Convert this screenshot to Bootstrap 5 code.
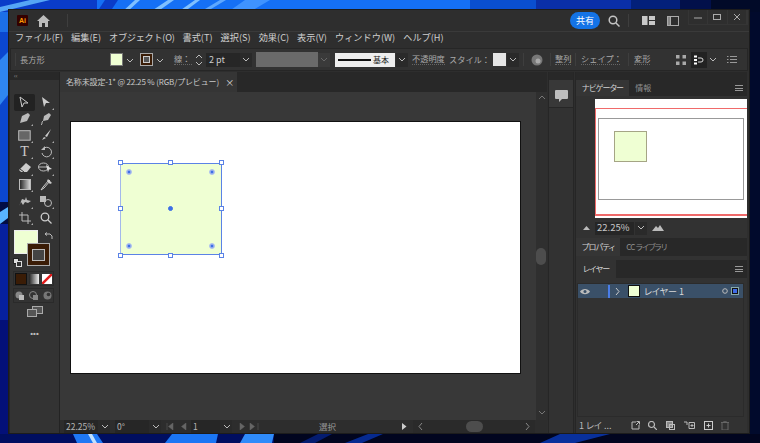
<!DOCTYPE html>
<html lang="ja"><head><meta charset="utf-8">
<link href="https://cdn.jsdelivr.net/npm/bootstrap@5.3.0/dist/css/bootstrap.min.css" rel="stylesheet">
<style>
html,body{height:443px;overflow:hidden}
body{position:relative;background:#02104a;font-family:"Noto Sans CJK JP","Liberation Sans",sans-serif;font-size:9.5px;color:#c4c4c4;line-height:1;white-space:nowrap}
.wall{position:absolute;inset:0;width:760px;height:443px}
.aiwin{position:absolute;left:8px;top:9px;width:742px;height:425px;background:#2e2e2e;border:1px solid #1c1c1c;display:flex;flex-direction:column}
.tbar{height:21px;flex:none}
.logo{width:11px;height:11px;margin-left:8px;background:#330000;color:#ff9a00;font:bold 7px "Liberation Sans",sans-serif;border-radius:1px}
.sharebtn{width:30px;height:17px;background:#1473e6;color:#fff;border-radius:9px;font-size:9px}
.sep{width:1px;height:13px;background:#3e3e3e;flex:none}
.winbtns{width:60px;height:15px;margin:-6px 1px 0 9px;border:1px solid #353535;border-top:0}
.winbtns>div{flex:1;height:100%;border-right:1px solid #353535}
.mbar{height:16px;flex:none;border-top:1px solid #3a3a3a;padding:0 0 3px 6px;gap:8px;color:#cfcfcf;font-size:9.2px}
.ctl{height:23px;flex:none;background:#323232;border:1px solid #262626;margin:1px 1px 1px 1px;padding-left:2px;color:#aaa;font-size:8.2px}
.swatch{background:#efffd3;border:1px solid #777}
.ddn{width:12px;height:14px;background:#2a2a2a;flex:none}
.under{border-bottom:1px dotted #666;padding-bottom:1px}
.wk{flex:1;min-height:0}
.tools{width:51px;flex:none;background:#333;border-right:1px solid #232323;border-left:1px solid #262626;position:relative}
.collapse-strip{height:8px;background:#282828;color:#999;font-size:6px;padding:0 4px}
.toolgrid{display:grid;grid-template-columns:21px 21px;grid-auto-rows:16.5px;margin:14px 0 0 4px}
.toolgrid>div{display:flex;align-items:center;justify-content:center;position:relative}
.toolgrid>.act{background:#222;border-radius:2px}
.toolgrid>.more::after{content:"";position:absolute;right:2px;bottom:1px;border:1px solid transparent;border-right-color:#aaa;border-bottom-color:#aaa}
.centerc{flex:1;min-width:0;display:flex;flex-direction:column;background:#383838}
.tabrow{height:20px;background:#282828;flex:none}
.doc{width:177px;height:20px;background:#353535;padding-left:6px;font-size:8px;letter-spacing:-.15px;color:#c8c8c8}
.canvasrow{flex:1;min-height:0}
.canvasarea{flex:1;min-width:0;position:relative;padding:30px 0 0 11px}
.board{width:449px;height:251px;background:#fff;outline:1px solid #111;position:relative}
.shape{position:absolute;left:49px;top:41px;width:102px;height:92px;background:#efffd3;border:1px solid #5b83e6;border-left-color:#a3b8ec}
.hd{position:absolute;width:5px;height:5px;background:#fff;border:1px solid #5b83e6}
.dot{position:absolute;width:6px;height:6px;border-radius:50%;background:radial-gradient(circle,#3d6fe6 25%,#8aa5ec 45%);border:1px solid #a9bdf0}
.vscr{width:11px;flex:none;background:#2f2f2f;position:relative}
.vpill{position:absolute;left:0;top:156px;width:10px;height:17px;border-radius:5px;background:#4d4d4d}
.stat{height:13px;flex:none;background:#2d2d2d;color:#b5b5b5;font-size:8.5px}
.statbox{background:#262626;height:13px;padding-left:2px}
.dock{width:26px;flex:none;margin-left:1px;background:#323232;border-left:1px solid #262626;border-right:1px solid #262626}
.dockcell{height:28px;padding-top:4px;background:#383838;border-bottom:1px solid #262626}
.rpanel{width:172px;flex:none;margin:0 2px 0 1px;display:flex;flex-direction:column;background:#323232;border-left:1px solid #262626}
.tabline{height:16px;background:#282828;flex:none;font-size:8px;letter-spacing:-.7px;color:#8f8f8f;font-feature-settings:"palt"}
.tabline>.tcell{height:100%;padding:0 6px}
.tabon{background:#353535;color:#d2d2d2}
.burger{width:8px;height:6px;border-top:1px solid #999;border-bottom:1px solid #999;position:relative;margin:0 4px 0 auto}
.burger::after{content:"";position:absolute;left:0;right:0;top:1.5px;border-top:1px solid #999}
.navprev{height:119px;flex:none;margin-top:3px;padding-left:19px}
.navwhite{background:#fff;width:152px;height:119px;position:relative;overflow:hidden}
.laylist{flex:1;min-height:0;margin:5px 3px 0 1px;border:1px solid #2b2b2b}
.lay{height:14px;background:#3a5068;font-size:9px;color:#d8d8d8;position:relative;font-feature-settings:"palt"}
</style></head><body>
<svg class="wall" viewBox="0 0 760 443" aria-hidden="true">
<rect width="760" height="443" fill="#020d44"/>
<rect x="0" y="0" width="97" height="12" fill="#0a3cc8"/>
<rect x="97" y="0" width="373" height="12" fill="#1570f5"/>
<rect x="470" y="0" width="66" height="12" fill="#0a4fd0"/>
<rect x="536" y="0" width="95" height="12" fill="#0a2fa8"/>
<rect x="631" y="0" width="49" height="12" fill="#03207a"/>
<rect x="680" y="0" width="31" height="12" fill="#02104a"/>
<rect x="711" y="0" width="49" height="12" fill="#010a28"/>
<polygon points="0,7 30,0 50,0 0,12" fill="#55a5f5"/>
<polygon points="97,12 105,0 118,0 110,12" fill="#0a3cc8"/>
<polygon points="122,12 135,0 140,0 127,12" fill="#7fc0ff"/>
<polygon points="150,12 168,0 174,0 157,12" fill="#7fc0ff"/>
<polygon points="178,12 195,0 200,0 184,12" fill="#7fc0ff"/>
<polygon points="200,12 220,0 226,0 206,12" fill="#5ea8ff"/>
<polygon points="228,12 245,0 270,0 250,12" fill="#3f93ff"/>
<rect x="0" y="12" width="8" height="20" fill="#1c6fe8"/>
<rect x="0" y="32" width="8" height="170" fill="#0b47cf"/>
<polygon points="0,60 8,52 8,95 0,105" fill="#2f86f0"/>
<polygon points="0,212 8,207 8,218 0,224" fill="#58b4ff"/>
<rect x="0" y="224" width="8" height="219" fill="#06209e"/>
<rect x="0" y="320" width="8" height="123" fill="#031078"/>
<rect x="750" y="12" width="10" height="431" fill="#010a2c"/>
<rect x="0" y="434" width="760" height="9" fill="#000e60"/>
<polygon points="73,434 97,434 103,443 77,443" fill="#1f78f5"/>
<polygon points="88,434 92,434 97,443 93,443" fill="#bfe0ff"/>
<polygon points="172,434 218,434 216,443 165,443" fill="#1b76f5"/>
<polygon points="245,434 274,434 272,443 240,443" fill="#2f8bfa"/>
<rect x="274" y="434" width="486" height="9" fill="#01051f"/>
<polygon points="318,434 332,434 315,443 300,443" fill="#041c70"/>
<polygon points="368,434 383,434 362,443 345,443" fill="#062a90"/>
<polygon points="560,434 610,434 575,443 540,443" fill="#08309c"/>
</svg>
<div class="aiwin">
  <div class="tbar d-flex align-items-center">
    <div class="logo d-flex align-items-center justify-content-center">Ai</div>
    <svg style="margin-left:9px" width="13" height="12" viewBox="0 0 13 12"><path d="M6.500 0 13 6h-2v6H8V8H5v4H2V6H0z" fill="#bdbdbd"/></svg>
    <div class="sep" style="margin-left:17px"></div>
    <div class="ms-auto sharebtn d-flex align-items-center justify-content-center">共有</div>
    <svg style="margin-left:8px" width="12" height="12" viewBox="0 0 12 12" fill="none" stroke="#c4c4c4" stroke-width="1.500"><circle cx="5" cy="5" r="3.800"/><path d="M8 8l3.500 3.500"/></svg>
    <div class="sep" style="margin-left:8px"></div>
    <svg style="margin-left:13px" width="13" height="9" viewBox="0 0 13 9" fill="#c8c8c8"><rect width="5.500" height="9"/><rect x="7" width="6" height="4"/><rect x="7" y="5" width="6" height="4"/></svg>
    <svg style="margin-left:12px" width="12" height="10" viewBox="0 0 12 10" fill="none" stroke="#aaa"><rect x=".5" y=".5" width="11" height="9"/><rect x=".5" y=".5" width="3" height="9" fill="#888"/></svg>
    <div class="winbtns d-flex align-items-center">
      <div class="d-flex align-items-center justify-content-center"><svg width="8" height="8"><path d="M0 5h8" stroke="#aaa"/></svg></div>
      <div class="d-flex align-items-center justify-content-center"><svg width="8" height="8"><rect x=".5" y="1.500" width="7" height="5" fill="none" stroke="#aaa"/></svg></div>
      <div class="d-flex align-items-center justify-content-center"><svg width="8" height="8"><path d="M1 1l6 6M7 1L1 7" stroke="#aaa"/></svg></div>
    </div>
  </div>
  <div class="mbar d-flex align-items-center">
    <span>ファイル(F)</span><span>編集(E)</span><span style="letter-spacing:-.3px">オブジェクト(O)</span><span>書式(T)</span><span>選択(S)</span><span>効果(C)</span><span>表示(V)</span><span>ウィンドウ(W)</span><span>ヘルプ(H)</span>
  </div>
  <div class="ctl d-flex align-items-center">
    <div class="sep" style="margin-left:2px"></div>
    <span style="margin-left:4px;width:90px">長方形</span>
    <div class="swatch" style="width:13px;height:13px;flex:none"></div>
    <svg style="margin-left:1px;flex:none" width="12" height="14" viewBox="0 0 12 14"><path d="M3 6l3 3 3-3" fill="none" stroke="#bbb"/></svg>
    <div style="margin-left:4px;width:13px;height:13px;background:#3a1c06;border:1px solid #aaa;flex:none" class="d-flex align-items-center justify-content-center"><div style="width:7px;height:7px;border:1px solid #ccc;background:#555"></div></div>
    <svg style="margin-left:1px;flex:none" width="12" height="14" viewBox="0 0 12 14"><path d="M3 6l3 3 3-3" fill="none" stroke="#bbb"/></svg>
    <span class="under" style="margin-left:8px;width:18px">線：</span>
    <svg style="margin-left:1px;flex:none" width="12" height="14" viewBox="0 0 12 14"><path d="M3 5l3-3 3 3M3 9l3 3 3-3" fill="none" stroke="#bbb"/></svg>
    <div class="d-flex align-items-center" style="background:#262626;width:34px;height:14px;padding-left:3px;margin-left:1px;font-size:9px;color:#ccc;flex:none">2 pt</div>
    <div class="ddn d-flex align-items-center justify-content-center"><svg width="8" height="6"><path d="M1 1l3 3 3-3" fill="none" stroke="#bbb"/></svg></div>
    <div style="width:62px;height:15px;background:#6a6a6a;margin-left:4px;flex:none"></div>
    <div class="ddn d-flex align-items-center justify-content-center" style="background:#3a3a3a"><svg width="8" height="6"><path d="M1 1l3 3 3-3" fill="none" stroke="#666"/></svg></div>
    <div class="d-flex align-items-center" style="margin-left:5px;width:60px;height:14px;background:#eee;color:#222;padding-left:3px;font-size:8px;flex:none"><span style="display:block;width:33px;height:2px;background:#111;margin-right:2px;flex:none"></span>基本</div>
    <div class="ddn d-flex align-items-center justify-content-center" style="margin-left:1px"><svg width="8" height="6"><path d="M1 1l3 3 3-3" fill="none" stroke="#bbb"/></svg></div>
    <span class="under" style="margin-left:4px;width:33px">不透明度</span>
    <span style="margin-left:4px;width:40px">スタイル：</span>
    <div style="width:13px;height:13px;background:#e6e6e6;margin-left:4px;flex:none"></div>
    <div class="ddn d-flex align-items-center justify-content-center" style="margin-left:1px"><svg width="8" height="6"><path d="M1 1l3 3 3-3" fill="none" stroke="#bbb"/></svg></div>
    <div class="sep" style="margin-left:4px"></div>
    <svg style="margin-left:7px;flex:none" width="12" height="12"><circle cx="6" cy="6" r="5.500" fill="#777"/><circle cx="7" cy="7" r="2.500" fill="#aaa"/></svg>
    <div class="sep" style="margin-left:7px"></div>
    <span class="under" style="margin-left:4px;width:16px">整列</span>
    <div class="sep" style="margin-left:4px"></div>
    <span class="under" style="margin-left:5px;width:39px">シェイプ：</span>
    <div class="sep" style="margin-left:8px"></div>
    <span class="under" style="margin-left:5px;width:16px">変形</span>
    <svg style="margin-left:26px;flex:none" width="10" height="10" fill="#aaa"><rect width="3.500" height="3.500"/><rect x="6.500" width="3.500" height="3.500"/><rect y="6.500" width="3.500" height="3.500"/><rect x="6.500" y="6.500" width="3.500" height="3.500"/></svg>
    <div class="d-flex align-items-center justify-content-center" style="margin-left:5px;width:16px;height:16px;background:#222;flex:none"><svg width="10" height="10"><path d="M0 1.500h3M0 5h3M0 8.500h3" stroke="#fff" stroke-width="2"/><path d="M4 3h3a2 2 0 0 1 0 4H4" fill="none" stroke="#ddd"/></svg></div>
    <svg style="margin-left:2px;flex:none" width="8" height="6"><path d="M1 1l3 3 3-3" fill="none" stroke="#bbb"/></svg>
    <svg style="margin-left:10px;flex:none" width="10" height="7"><path d="M0 .5h1.500M3 .5h7M0 3.500h1.500M3 3.500h7M0 6.500h1.500M3 6.500h7" stroke="#999"/></svg>
  </div>
  <div class="wk d-flex">
    <div class="tools">
      <div class="collapse-strip d-flex align-items-center">‹‹</div>
      <div class="toolgrid">
        <div class="act"><svg width="11" height="13" viewBox="0 0 11 13"><path d="M1 1l8 6H5l-2 4z" fill="none" stroke="#ccc"/></svg></div>
        <div class="more"><svg width="11" height="13" viewBox="0 0 11 13"><path d="M2 1l8 6H6l-2 4z" fill="#ccc"/></svg></div>
        <div class="more"><svg width="12" height="12" viewBox="0 0 12 12"><path d="M11 2 9 0 3 3 1 10l7-2z" fill="#bbb"/></svg></div>
        <div><svg width="12" height="12" viewBox="0 0 12 12"><path d="M11 2 9 0 4 3 3 8l5-1z" fill="#bbb"/><path d="M3 8C1 9 3 11 1 12" stroke="#bbb" fill="none"/></svg></div>
        <div class="more"><svg width="13" height="11"><rect x=".7" y=".7" width="11.500" height="9.500" fill="#666" stroke="#bbb"/></svg></div>
        <div class="more"><svg width="12" height="12" viewBox="0 0 12 12"><path d="M11 0 5 7 7 8zM4 8l2 1-4 2z" fill="#ccc"/></svg></div>
        <div class="more"><span style="font:14px 'Liberation Serif',serif;color:#ccc">T</span></div>
        <div class="more"><svg width="12" height="12" viewBox="0 0 12 12"><path d="M3 3a4.800 4.800 0 1 1-1 4" fill="none" stroke="#bbb"/><path d="M5 0v4H1z" fill="#bbb"/></svg></div>
        <div class="more"><svg width="12" height="11" viewBox="0 0 12 11"><path d="M7 0l5 4-4 5-6 0-2-2z" fill="#ccc"/><path d="M1 6l4 3" stroke="#333"/></svg></div>
        <div class="more"><svg width="15" height="12" viewBox="0 0 15 12"><ellipse cx="5.500" cy="5" rx="5" ry="4" fill="none" stroke="#bbb"/><path d="M1 5h9" stroke="#bbb"/><path d="M8 3l6 4-3 .5-1 3z" fill="#ddd"/></svg></div>
        <div class="more"><svg width="12" height="11"><defs><linearGradient id="g1"><stop offset="0" stop-color="#222"/><stop offset="1" stop-color="#ddd"/></linearGradient></defs><rect x=".5" y=".5" width="11" height="10" fill="url(#g1)" stroke="#bbb"/></svg></div>
        <div><svg width="12" height="12" viewBox="0 0 12 12"><path d="M9 1 3 8 1 11l3-2 6-7z" fill="none" stroke="#ccc"/><path d="M8 0l4 4-2 1-3-3z" fill="#ccc"/></svg></div>
        <div class="more"><svg width="14" height="12" viewBox="0 0 14 12"><path d="M1 11 4 4l3 1 1-3 1 3 4 1-3 2-3-1-2 3-2-3z" fill="#bbb"/></svg></div>
        <div class="more"><svg width="14" height="11" viewBox="0 0 14 11"><rect x="1" y="0" width="6" height="6" fill="#bbb"/><circle cx="9" cy="7" r="3.500" fill="none" stroke="#bbb"/></svg></div>
        <div class="more"><svg width="12" height="12" viewBox="0 0 12 12"><path d="M3 0v9h9M0 3h9v9" fill="none" stroke="#bbb"/></svg></div>
        <div><svg width="12" height="12" viewBox="0 0 12 12" fill="none" stroke="#ccc" stroke-width="1.300"><circle cx="5" cy="5" r="3.800"/><path d="M8 8l3.500 3.500"/></svg></div>
      </div>
      <div style="position:relative;height:37px;margin-top:4px">
        <div class="swatch" style="position:absolute;left:4px;top:0;width:24px;height:24px;border-color:#eee"></div>
        <div style="position:absolute;left:17px;top:13px;width:23px;height:23px;background:#3a1c06;border:1px solid #aaa;display:flex;align-items:center;justify-content:center"><div style="width:13px;height:12px;border:1px solid #bbb;background:#444"></div></div>
        <svg style="position:absolute;left:34px;top:2px" width="9" height="9" viewBox="0 0 9 9"><path d="M1 2h5l2 2M8 7V4M1 2l2-1.500M1 2l2 1.500" fill="none" stroke="#bbb"/></svg>
        <svg style="position:absolute;left:3px;top:28px" width="9" height="9"><rect x=".5" y=".5" width="5" height="5" fill="#ddd" stroke="#222"/><rect x="3.500" y="3.500" width="5" height="5" fill="#333" stroke="#ddd"/></svg>
      </div>
      <div class="d-flex align-items-center justify-content-center" style="gap:3px;margin:4px 5px 0 3px;height:15px;border:1px solid #2a2a2a">
        <div style="width:10px;height:10px;background:#3a1c06;outline:1px solid #111"></div>
        <div style="width:10px;height:10px;background:linear-gradient(90deg,#222,#eee)"></div>
        <svg width="10" height="10"><rect width="10" height="10" fill="#fff"/><path d="M0 10 10 0" stroke="#e01b1b" stroke-width="2.500"/></svg>
      </div>
      <div class="d-flex align-items-center justify-content-center" style="gap:5px;margin:2px 5px 0 3px;height:15px;border:1px solid #2a2a2a">
        <svg width="9" height="9"><circle cx="4" cy="4" r="3.500" fill="#888"/><rect x="4" y="4" width="5" height="5" fill="#bbb"/></svg>
        <svg width="9" height="9"><circle cx="4" cy="4" r="3.500" fill="none" stroke="#888"/><rect x="4" y="4" width="5" height="5" fill="#888"/></svg>
        <svg width="9" height="9"><circle cx="4.500" cy="4.500" r="4" fill="#777"/><circle cx="5.500" cy="3.500" r="1.800" fill="#333"/></svg>
      </div>
      <div class="d-flex justify-content-center" style="margin-top:3px"><svg width="16" height="12" viewBox="0 0 16 12"><rect x="5.500" y=".5" width="10" height="7" fill="#555" stroke="#aaa"/><rect x=".5" y="3.500" width="9" height="7" fill="#555" stroke="#aaa"/></svg></div>
      <div class="text-center" style="margin-top:11px;color:#bbb;font:bold 8px 'Liberation Sans',sans-serif">•••</div>
    </div>
    <div class="centerc">
      <div class="tabrow d-flex"><div class="doc d-flex align-items-center"><span>名称未設定-1* @ 22.25 % (RGB/プレビュー)</span><span class="ms-auto" style="color:#ddd;margin-right:3px;font-size:9px">×</span></div></div>
      <div class="canvasrow d-flex">
        <div class="canvasarea">
          <div class="board">
            <div class="shape"></div>
            <div class="hd" style="left:46.500px;top:38px"></div><div class="hd" style="left:97px;top:38px"></div><div class="hd" style="left:148px;top:38px"></div>
            <div class="hd" style="left:46.500px;top:84px"></div><div class="hd" style="left:148px;top:84px"></div>
            <div class="hd" style="left:46.500px;top:130.500px"></div><div class="hd" style="left:97px;top:130.500px"></div><div class="hd" style="left:148px;top:130.500px"></div>
            <div class="dot" style="left:55px;top:47px"></div><div class="dot" style="left:138px;top:47px"></div><div class="dot" style="left:55px;top:121px"></div><div class="dot" style="left:138px;top:121px"></div>
            <div class="dot" style="left:97px;top:84px;width:5px;height:5px;background:#3d6fe6;border-color:#3d6fe6"></div>
          </div>
        </div>
        <div class="vscr"><svg style="position:absolute;left:2px;top:3px" width="8" height="6"><path d="M1 4l3-3 3 3" fill="none" stroke="#777"/></svg><div class="vpill"></div><svg style="position:absolute;left:2px;bottom:4px" width="8" height="6"><path d="M1 1l3 3 3-3" fill="none" stroke="#777"/></svg></div>
      </div>
      <div class="stat d-flex align-items-center">
        <div class="statbox d-flex align-items-center" style="width:34px;margin-left:4px">22.25%</div>
        <div class="statbox d-flex align-items-center justify-content-center" style="width:12px;background:#2a2a2a"><svg width="8" height="6"><path d="M1 1l3 3 3-3" fill="none" stroke="#bbb"/></svg></div>
        <div class="statbox d-flex align-items-center" style="width:34px;margin-left:5px">0°</div>
        <div class="statbox d-flex align-items-center justify-content-center" style="width:12px;background:#2a2a2a"><svg width="8" height="6"><path d="M1 1l3 3 3-3" fill="none" stroke="#bbb"/></svg></div>
        <svg style="margin-left:5px" width="22" height="7"><path d="M1 0v7M7 0 2.500 3.500 7 7zM20 0 15.500 3.500 20 7z" fill="#666" stroke="#666" stroke-width=".5"/></svg>
        <div class="statbox d-flex align-items-center" style="width:29px;margin-left:3px">1</div>
        <div class="statbox d-flex align-items-center justify-content-center" style="width:12px;background:#2a2a2a"><svg width="8" height="6"><path d="M1 1l3 3 3-3" fill="none" stroke="#bbb"/></svg></div>
        <svg style="margin-left:6px" width="22" height="7"><path d="M2 0l4.500 3.500L2 7zM12 0l4.500 3.500L12 7zM20 0v7" fill="#666" stroke="#666" stroke-width=".5"/></svg>
        <span class="flex-grow-1 text-center" style="color:#999;font-size:8.500px;padding-right:6px">選択</span>
        <svg width="6" height="7" style="margin-right:6px"><path d="M1 0l4.500 3.500L1 7z" fill="#ccc"/></svg>
        <div class="d-flex align-items-center justify-content-between" style="width:122px;height:13px;background:#2a2a2a;padding:0 5px;position:relative;margin-right:12px">
          <svg width="5" height="7"><path d="M4 0 1 3.500 4 7" fill="none" stroke="#888"/></svg>
          <div style="width:17px;height:11px;border-radius:6px;background:#4d4d4d"></div>
          <svg width="5" height="7"><path d="M1 0l3 3.500L1 7" fill="none" stroke="#888"/></svg>
        </div>
      </div>
    </div>
    <div class="dock">
      <div style="height:8px;background:#282828"></div>
      <div class="dockcell d-flex align-items-center justify-content-center"><svg width="13" height="12" viewBox="0 0 13 12"><path d="M1 0h11a1 1 0 0 1 1 1v7a1 1 0 0 1-1 1H7l-3 3V9H1a1 1 0 0 1-1-1V1a1 1 0 0 1 1-1z" fill="#bdbdbd"/></svg></div>
    </div>
    <div class="rpanel">
      <div style="height:8px;background:#282828;flex:none"></div>
      <div class="tabline d-flex align-items-center"><div class="tcell tabon d-flex align-items-center">ナビゲーター</div><div class="tcell d-flex align-items-center" style="letter-spacing:0">情報</div><div class="burger"></div></div>
      <div class="navprev">
        <div class="navwhite">
          <div style="position:absolute;left:0;right:0;top:9px;height:1px;background:#f06a6a"></div>
          <div style="position:absolute;left:0;right:0;top:115px;height:2px;background:#f06a6a"></div>
          <div style="position:absolute;left:0;top:9px;height:107px;width:1px;background:#f06a6a"></div>
          <div style="position:absolute;left:3px;top:19px;width:146px;height:82px;border:1px solid #999"></div>
          <div style="position:absolute;left:19px;top:32px;width:33px;height:31px;background:#efffd3;border:1px solid #a5a585"></div>
        </div>
      </div>
      <div class="d-flex align-items-center" style="height:20px;flex:none;padding-left:7px;font-size:9.500px;color:#c8c8c8">
        <svg width="7" height="4"><path d="M0 4h7L3.500 0z" fill="#bbb"/></svg>
        <div class="d-flex align-items-center" style="width:39px;height:13px;background:#262626;padding-left:2px;margin-left:5px;">22.25%</div>
        <div class="ddn d-flex align-items-center justify-content-center" style="margin-left:1px;height:13px"><svg width="8" height="6"><path d="M1 1l3 3 3-3" fill="none" stroke="#bbb"/></svg></div>
        <svg style="margin-left:5px" width="12" height="6"><path d="M0 6 4 1l2 2 2-3 4 6z" fill="#bbb"/></svg>
      </div>
      <div class="tabline d-flex align-items-center" style="height:18px"><div class="tcell tabon d-flex align-items-center">プロパティ</div><div class="tcell d-flex align-items-center">CC ライブラリ</div></div>
      <div style="height:4px;flex:none"></div>
      <div class="tabline d-flex align-items-center" style="height:18px"><div class="tcell tabon d-flex align-items-center" style="background:#323232;padding:0 7px">レイヤー</div><div class="burger"></div></div>
      <div class="laylist">
        <div class="lay d-flex align-items-center">
          <svg style="margin-left:2px" width="10" height="7" viewBox="0 0 10 7"><path d="M0 3.500C2 0 8 0 10 3.500 8 7 2 7 0 3.500z" fill="#bbb"/><circle cx="5" cy="3.500" r="1.500" fill="#3a5068"/></svg>
          <div style="width:2px;height:13px;background:#4a7de8;margin-left:18px"></div>
          <svg style="margin-left:5px" width="6" height="7"><path d="M1 0l3 3.500L1 7" fill="none" stroke="#ccc"/></svg>
          <div style="width:12px;height:12px;margin-left:7px;background:#efffd3;border:1px solid #111"></div>
          <span style="margin-left:4px">レイヤー 1</span>
          <svg class="ms-auto" style="margin-right:4px" width="6" height="6"><circle cx="3" cy="3" r="2.300" fill="none" stroke="#bbb"/></svg>
          <div style="width:6px;height:6px;background:#3f6be6;border:1px solid #111;outline:1px solid #8aa;margin-right:5px"></div>
        </div>
      </div>
      <div class="d-flex align-items-center" style="height:16px;flex:none;padding-left:3px;color:#bbb;font-size:9px;font-feature-settings:'palt'">
        <span style="width:36px">1 レイ ...</span>
        <svg style="margin-left:16px;flex:none" width="9" height="9" viewBox="0 0 9 9" fill="none" stroke="#bbb"><path d="M5 1H1v7h7V4M5 4l3-3M5.500 .5h3v3"/></svg>
        <svg style="margin-left:8px;flex:none" width="9" height="9" viewBox="0 0 9 9" fill="none" stroke="#bbb" stroke-width="1.200"><circle cx="3.500" cy="3.500" r="3"/><path d="M6 6l3 3"/></svg>
        <svg style="margin-left:9px;flex:none" width="9" height="9"><rect x=".5" y=".5" width="6" height="6" fill="#888" stroke="#bbb"/><rect x="3.500" y="3.500" width="5" height="5" fill="none" stroke="#bbb"/></svg>
        <svg style="margin-left:9px;flex:none" width="11" height="9"><path d="M0 1h3v3M5 1.500h5.500v6H5zM6.500 4.500h3M8 3v3" fill="none" stroke="#bbb"/></svg>
        <svg style="margin-left:9px;flex:none" width="9" height="9"><rect x=".5" y=".5" width="8" height="8" fill="none" stroke="#ccc"/><path d="M2.500 4.500h4M4.500 2.500v4" stroke="#ccc"/></svg>
        <svg style="margin-left:8px;flex:none" width="8" height="9"><path d="M0 1.500h8M1 2v7h6V2M3 1V0h2v1" fill="none" stroke="#666"/></svg>
      </div>
    </div>
  </div>
</div>
</body></html>
